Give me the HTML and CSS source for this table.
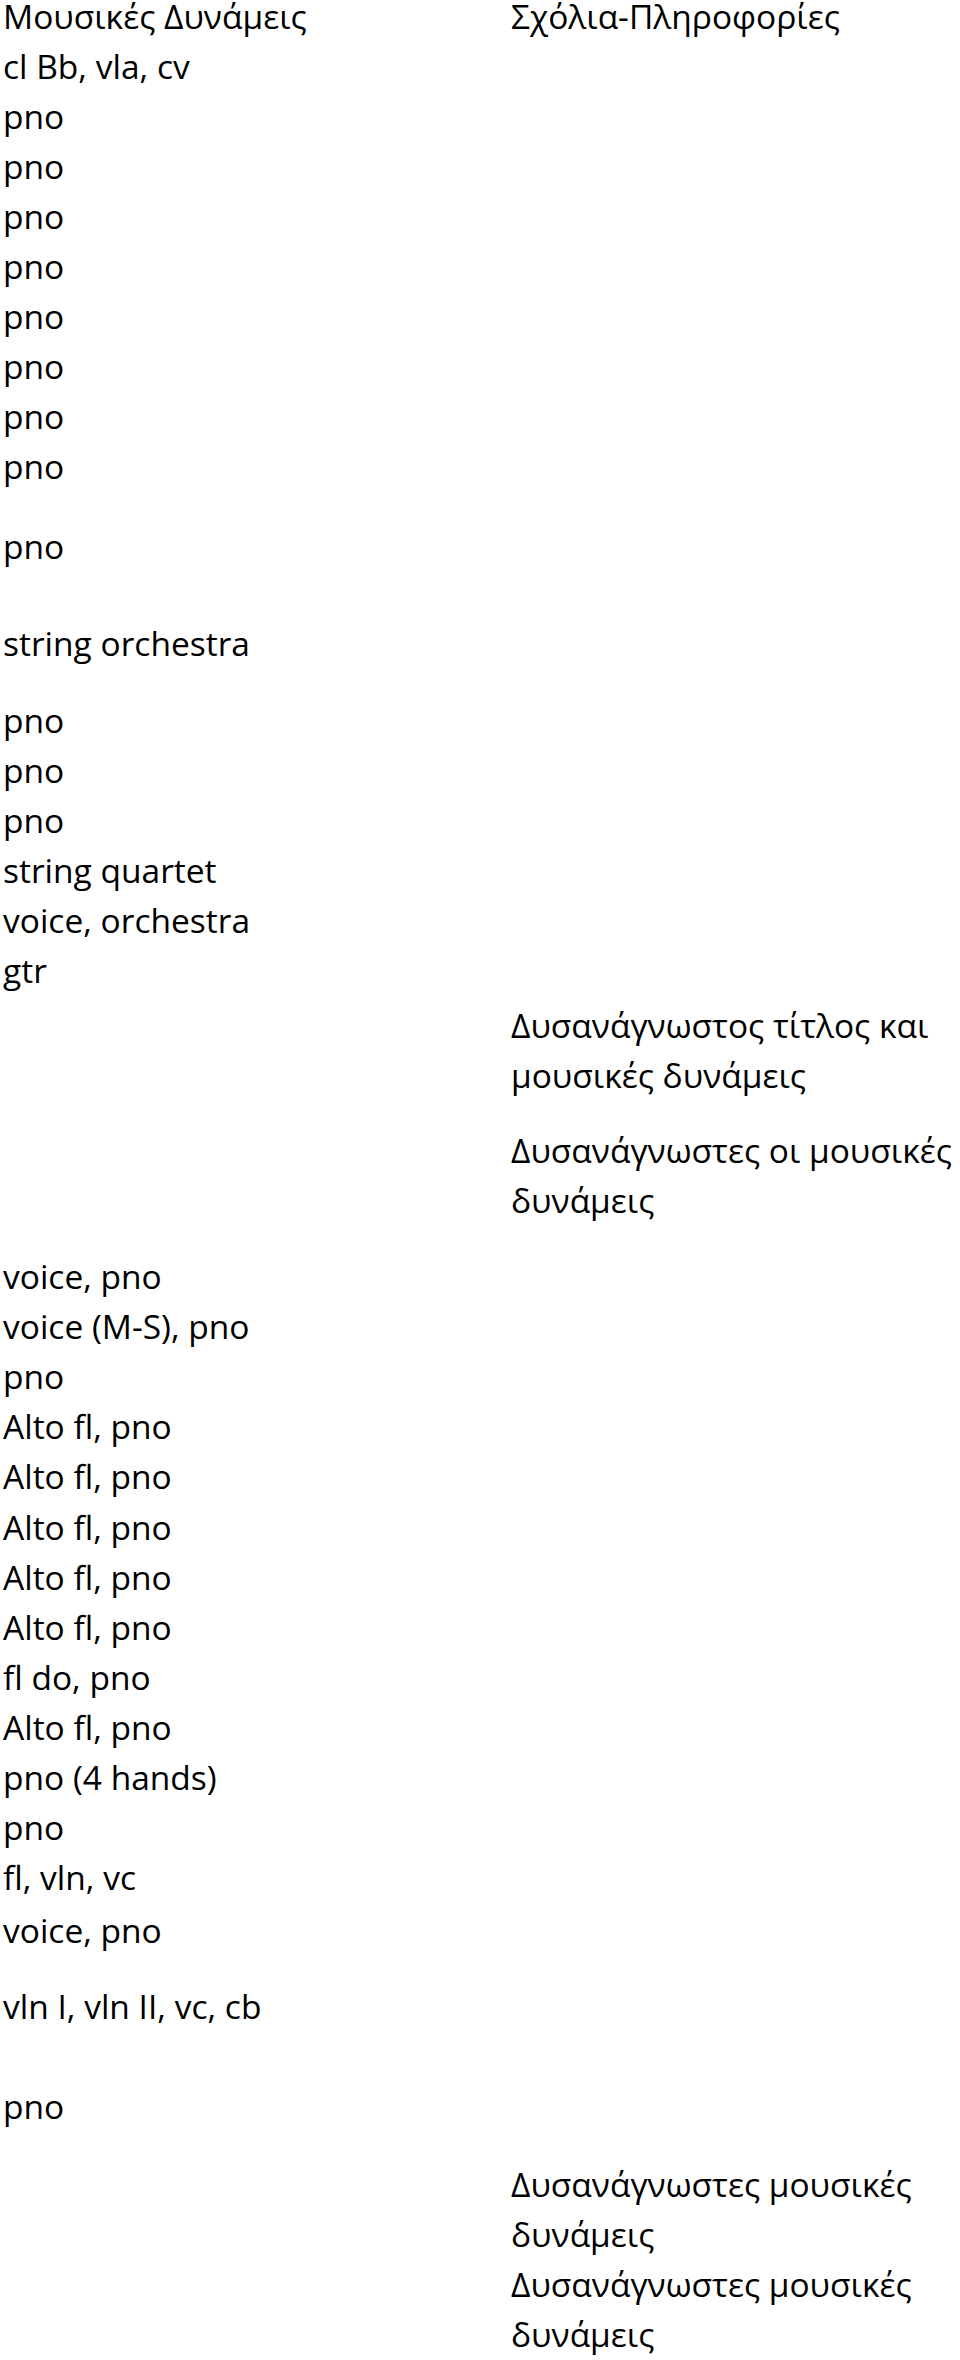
FILE: index.html
```html
<!DOCTYPE html>
<html lang="el">
<head>
<meta charset="utf-8">
<title>Μουσικές Δυνάμεις</title>
<link rel="stylesheet" href="styles.css">
</head>
<body>
<div class="page">
  <div class="col col-left">
    <div class="line">Μουσικές Δυνάμεις</div>
    <div class="line">cl Bb, vla, cv</div>
    <div class="line">pno</div>
    <div class="line">pno</div>
    <div class="line">pno</div>
    <div class="line">pno</div>
    <div class="line">pno</div>
    <div class="line">pno</div>
    <div class="line">pno</div>
    <div class="line">pno</div>
    <div class="line g30">pno</div>
    <div class="line g47">string orchestra</div>
    <div class="line g27">pno</div>
    <div class="line">pno</div>
    <div class="line">pno</div>
    <div class="line">string quartet</div>
    <div class="line">voice, orchestra</div>
    <div class="line">gtr</div>
    <div class="line g256">voice, pno</div>
    <div class="line">voice (M-S), pno</div>
    <div class="line">pno</div>
    <div class="line">Alto fl, pno</div>
    <div class="line">Alto fl, pno</div>
    <div class="line g1">Alto fl, pno</div>
    <div class="line">Alto fl, pno</div>
    <div class="line">Alto fl, pno</div>
    <div class="line">fl do, pno</div>
    <div class="line">Alto fl, pno</div>
    <div class="line">pno (4 hands)</div>
    <div class="line">pno</div>
    <div class="line">fl, vln, vc</div>
    <div class="line g3">voice, pno</div>
    <div class="line g26">vln I, vln II, vc, cb</div>
    <div class="line g50">pno</div>
  </div>
  <div class="col col-right">
    <div class="line">Σχόλια-Πληροφορίες</div>
    <div class="line g959">Δυσανάγνωστος τίτλος και</div>
    <div class="line">μουσικές δυνάμεις</div>
    <div class="line g25">Δυσανάγνωστες οι μουσικές</div>
    <div class="line">δυνάμεις</div>
    <div class="line g934">Δυσανάγνωστες μουσικές</div>
    <div class="line">δυνάμεις</div>
    <div class="line">Δυσανάγνωστες μουσικές</div>
    <div class="line">δυνάμεις</div>
  </div>
</div>
</body>
</html>
```
FILE: styles.css
```css
html, body {
  margin: 0;
  padding: 0;
  background: #ffffff;
}
body {
  font-family: "Open Sans", "Noto Sans", "DejaVu Sans", sans-serif;
  font-size: 33.5px;
  font-weight: 500;
  color: #000000;
}
.page {
  display: flex;
  width: 960px;
  height: 2360px;
  overflow: hidden;
}
.col {
  display: flex;
  flex-direction: column;
}
.col-left {
  width: 509px;
  padding-left: 3px;
  box-sizing: border-box;
}
.col-right {
  padding-left: 2px;
}
.line {
  line-height: 33px;
  height: 33px;
  margin-bottom: 17px;
  white-space: nowrap;
}
.g1 { margin-top: 1px; }
.g3 { margin-top: 3px; }
.g25 { margin-top: 25px; }
.g26 { margin-top: 26px; }
.g27 { margin-top: 27px; }
.g30 { margin-top: 30px; }
.g47 { margin-top: 47px; }
.g50 { margin-top: 50px; }
.g256 { margin-top: 256px; }
.g934 { margin-top: 934px; }
.g959 { margin-top: 959px; }
```
